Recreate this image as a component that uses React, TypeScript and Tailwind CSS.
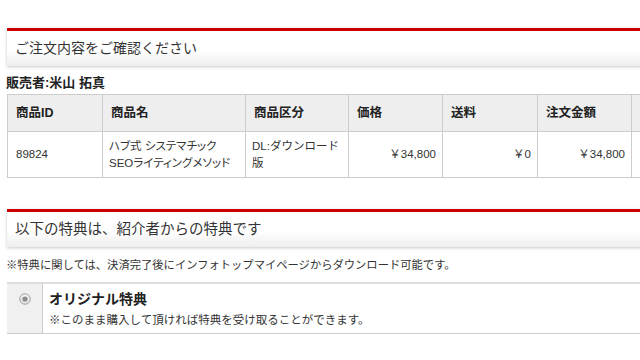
import React from 'react';

const font = "font-['Liberation_Sans','Noto_Sans_CJK_JP',sans-serif]";

function SectionHeader({ title, size }: { title: string; size: string }) {
  return (
    <div className="border-t-[3px] border-[#cc0000] shadow-[0_1px_3px_rgba(0,0,0,0.22)]">
      <div className={`h-[35px] flex items-center pl-2 bg-linear-to-b from-white from-55% to-[#eeeeee] text-[#333] ${size}`}>
        {title}
      </div>
    </div>
  );
}

const cols = [
  { label: '商品ID', w: 'w-[95px]' },
  { label: '商品名', w: 'w-[143px]' },
  { label: '商品区分', w: 'w-[103px]' },
  { label: '価格', w: 'w-[94px]' },
  { label: '送料', w: 'w-[95px]' },
  { label: '注文金額', w: 'w-[94px]' },
  { label: '', w: 'w-[94px]' },
];

export default function App() {
  return (
    <div className={`w-[640px] h-[360px] overflow-hidden bg-white ${font}`}>
      <div className="w-[720px] ml-[7px] pt-[28px]">
        <SectionHeader title="ご注文内容をご確認ください" size="text-[14px]" />

        <div className="mt-[9px] -ml-px text-[13px] leading-4 font-bold text-[#222]">販売者:米山 拓真</div>

        <table className="mt-[3px] w-[718px] border-collapse table-fixed text-[#333]">
          <thead>
            <tr className="h-[37px] bg-[#eeeeee]">
              {cols.map((c, i) => (
                <th
                  key={i}
                  className={`${c.w} border border-[#cccccc] px-2 text-left text-[12.5px] font-bold text-[#222]`}
                >
                  {c.label}
                </th>
              ))}
            </tr>
          </thead>
          <tbody className="text-[11.5px] leading-[17px]">
            <tr className="h-[46px]">
              <td className="border border-[#cccccc] px-2">89824</td>
              <td className="border border-[#cccccc] px-1.5 whitespace-nowrap [font-feature-settings:'palt']">
                ハブ式 システマチック
                <br />
                SEOライティングメソッド
              </td>
              <td className="border border-[#cccccc] px-1.5 whitespace-nowrap">
                DL:ダウンロード
                <br />版
              </td>
              <td className="border border-[#cccccc] px-1.5 text-right">￥34,800</td>
              <td className="border border-[#cccccc] px-1.5 text-right">￥0</td>
              <td className="border border-[#cccccc] px-1.5 text-right">￥34,800</td>
              <td className="border border-[#cccccc] px-1.5"></td>
            </tr>
          </tbody>
        </table>

        <div className="mt-[31px]">
          <SectionHeader title="以下の特典は、紹介者からの特典です" size="text-[14.5px]" />
        </div>

        <div className="mt-[10px] -ml-px text-[11.3px] leading-4 text-[#333]">
          ※特典に関しては、決済完了後にインフォトップマイページからダウンロード可能です。
        </div>

        <div className="mt-[9px] flex border-t-2 border-t-[#dddddd] border-b border-b-[#cccccc]">
          <div className="w-[36px] shrink-0 bg-[#f0f0f0] border-r border-[#cccccc] flex justify-center pt-[9px]">
            <svg width="12" height="12" viewBox="0 0 12 12">
              <defs>
                <radialGradient id="rg" cx="50%" cy="40%" r="60%">
                  <stop offset="0%" stopColor="#ffffff" />
                  <stop offset="100%" stopColor="#d8d8d8" />
                </radialGradient>
              </defs>
              <circle cx="6" cy="6" r="5.3" fill="url(#rg)" stroke="#a8a8a8" strokeWidth="1" />
              <circle cx="6" cy="6" r="2.6" fill="#8c8c8c" />
            </svg>
          </div>
          <div className="pl-1.5 pt-[6px] pb-[5px]">
            <div className="text-[14px] leading-[18px] font-bold text-[#222]">オリジナル特典</div>
            <div className="mt-[4px] text-[11.5px] leading-4 text-[#333]">
              ※このまま購入して頂ければ特典を受け取ることができます。
            </div>
          </div>
        </div>
      </div>
    </div>
  );
}
